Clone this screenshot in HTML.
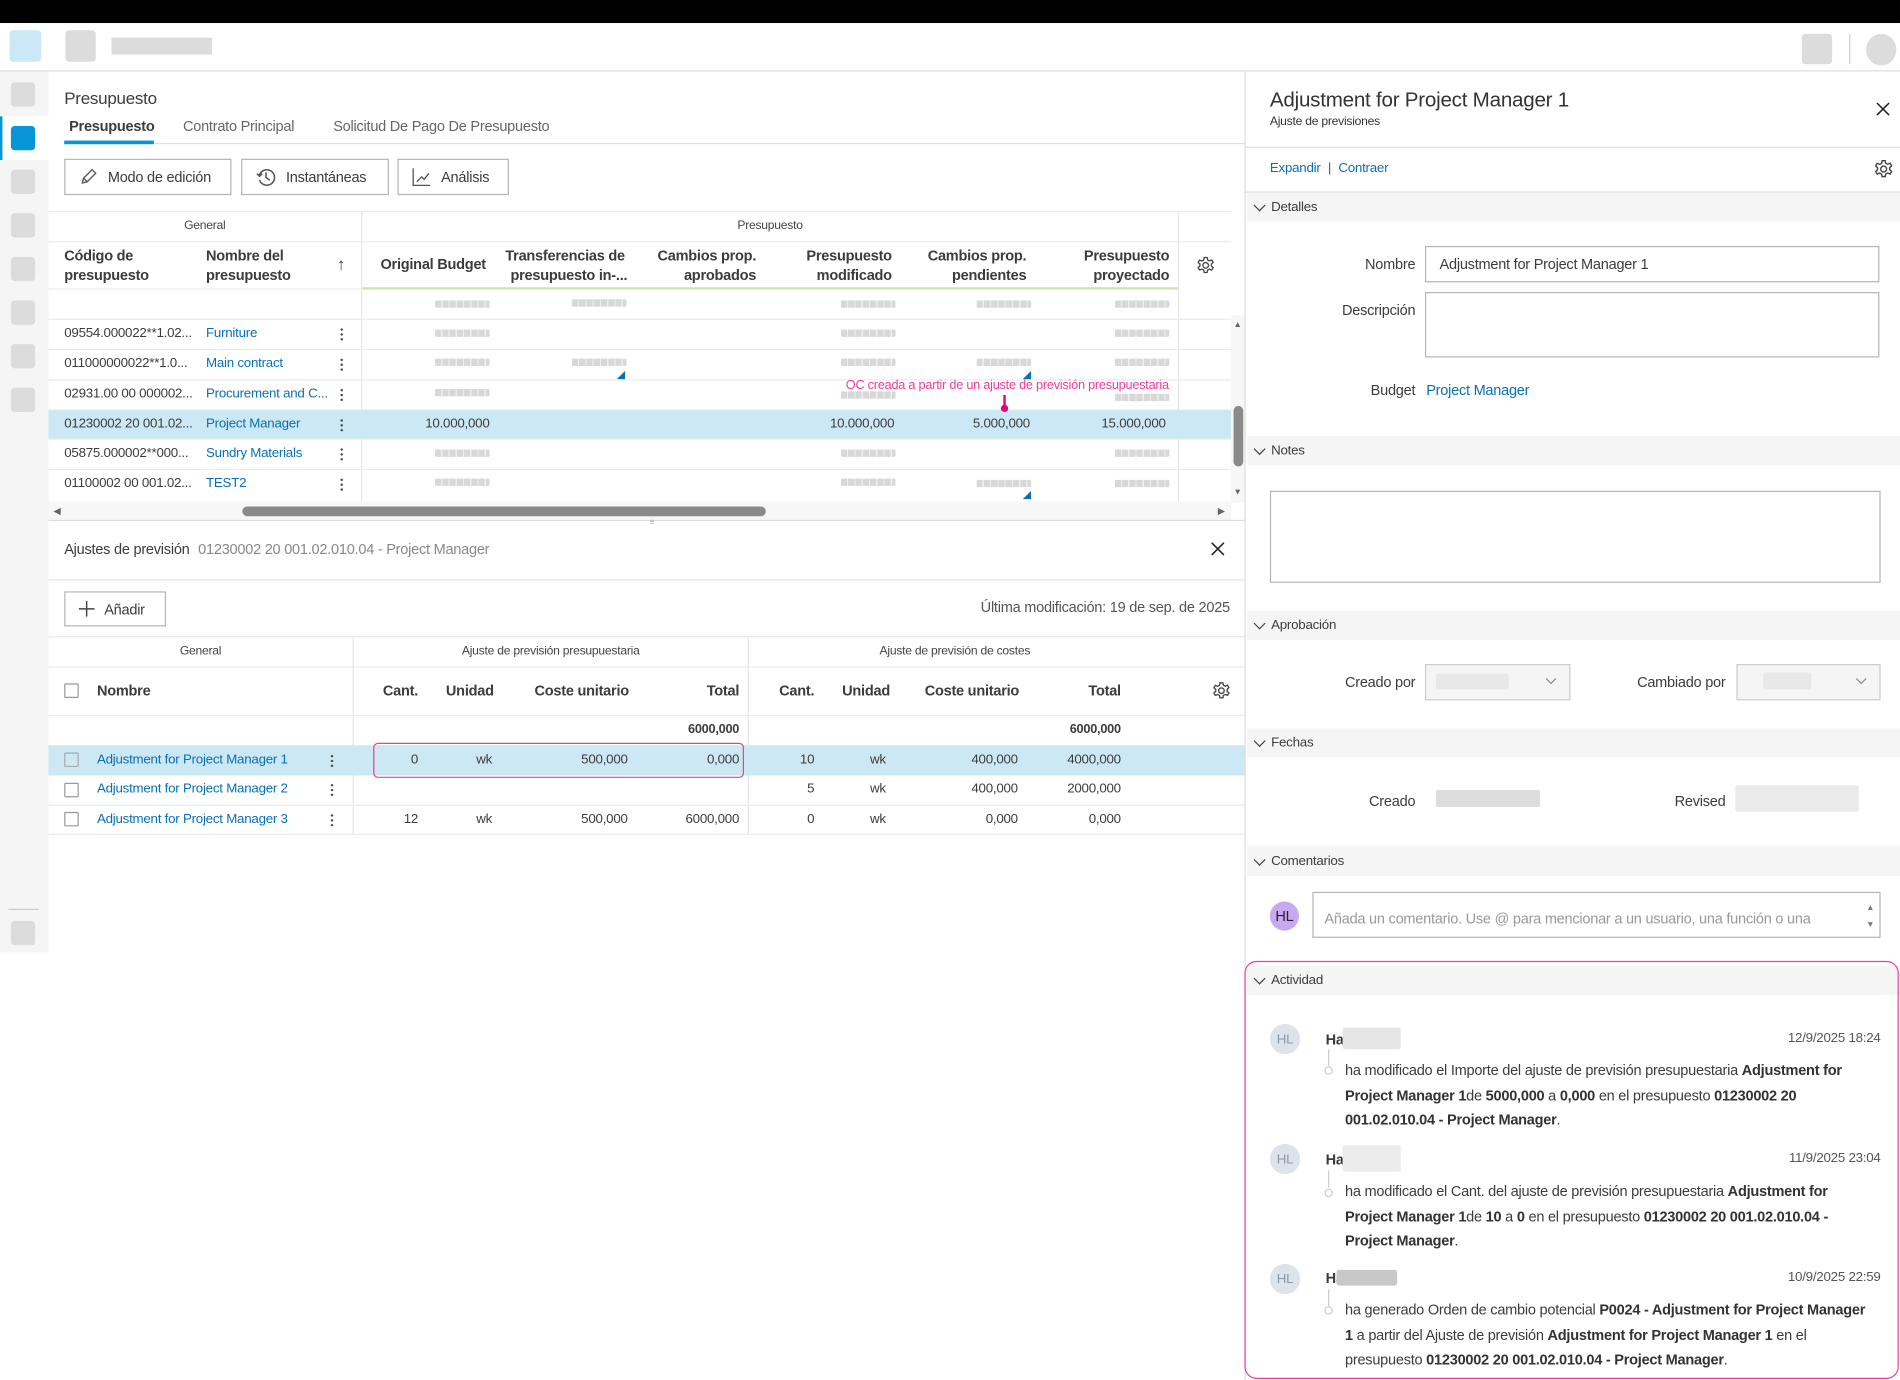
<!DOCTYPE html>
<html><head><meta charset="utf-8">
<style>
*{box-sizing:border-box;margin:0;padding:0}
html,body{width:1900px;height:1380px;overflow:hidden;background:#fff}
#s{position:absolute;left:0;top:0;width:1568px;height:1139px;transform:scale(1.21173);transform-origin:0 0;font-family:"Liberation Sans",sans-serif;color:#3c3c3c;font-size:11px;letter-spacing:-0.2px}
.a{position:absolute;white-space:nowrap}
.g{background:#dcdcdc;border-radius:3px;position:absolute}
.l{color:#0a6fb5}
.r{text-align:right}
.hl{position:absolute;height:1px;background:#ebebeb}
.vl{position:absolute;width:1px;background:#e6e6e6}
.blur{position:absolute;background:#e4e4e4;border-radius:2px}
.btn{position:absolute;border:1px solid #b5b5b5;background:#fff;font-size:12px;color:#3c3c3c;display:flex;align-items:center;gap:8px;padding-left:11px}
.sec{position:absolute;left:1029px;width:539px;background:#f5f5f5;font-size:11px;color:#3c3c3c;padding-left:20px;display:flex;align-items:center}
.sec:before{content:"";position:absolute;left:7px;top:50%;width:6px;height:6px;border-right:1.3px solid #444;border-bottom:1.3px solid #444;transform:translateY(-70%) rotate(45deg)}
.box{position:absolute;border:1px solid #b5b5b5;background:#fff}
.lab{position:absolute;font-size:12px;color:#3c3c3c;text-align:right;font-weight:500}
.dots{position:absolute;width:2px;height:11px;background:radial-gradient(circle,#444 0.9px,transparent 1.1px) 0 0/2px 4px repeat-y}
.cb{position:absolute;width:12px;height:12px;border:1px solid #999;border-radius:1px;background:#fff}
.ph{position:absolute;height:6px;width:45px;background:repeating-linear-gradient(90deg,#d8d8d8 0 5px,#eee 5px 6px);border-radius:1px}
.act{position:absolute;left:1110px;width:438px;font-size:12px;line-height:20.5px;color:#3c3c3c;white-space:normal}
.act b{font-weight:bold;color:#333}
.av{position:absolute;width:25px;height:25px;border-radius:50%;background:#dde3ea;color:#8a97a8;font-size:11px;display:flex;align-items:center;justify-content:center}
</style></head><body><div id="s">
<div class="a" style="left:0;top:0;width:1568px;height:19px;background:#000"></div>
<div class="a" style="left:0;top:58px;width:1568px;height:1px;background:#ddd"></div>
<div class="a" style="left:8px;top:25px;width:26px;height:26px;border-radius:3px;background:#cce8f6"></div>
<div class="g" style="left:54px;top:25px;width:25px;height:26px"></div>
<div class="a" style="left:92px;top:31px;width:83px;height:14px;background:#dcdcdc"></div>
<div class="g" style="left:1487px;top:28px;width:25px;height:25px"></div>
<div class="a" style="left:1526px;top:28px;width:1px;height:25px;background:#ccc"></div>
<div class="a" style="left:1540px;top:28px;width:25px;height:26px;border-radius:50%;background:#dcdcdc"></div>
<div class="a" style="left:0;top:59px;width:40px;height:727px;background:#f5f5f5"></div>
<div class="g" style="left:9px;top:68px;width:20px;height:20px"></div>
<div class="a" style="left:0;top:96px;width:40px;height:36px;background:#fff"></div>
<div class="a" style="left:0;top:96px;width:2px;height:36px;background:#0696d7"></div>
<div class="a" style="left:9px;top:104px;width:20px;height:20px;border-radius:3px;background:#0696d7"></div>
<div class="g" style="left:9px;top:140px;width:20px;height:20px"></div>
<div class="g" style="left:9px;top:176px;width:20px;height:20px"></div>
<div class="g" style="left:9px;top:212px;width:20px;height:20px"></div>
<div class="g" style="left:9px;top:248px;width:20px;height:20px"></div>
<div class="g" style="left:9px;top:284px;width:20px;height:20px"></div>
<div class="g" style="left:9px;top:320px;width:20px;height:20px"></div>
<div class="a" style="left:7px;top:750px;width:25px;height:1px;background:#ccc"></div>
<div class="g" style="left:9px;top:760px;width:20px;height:20px"></div>
<div class="a" style="left:53px;top:73px;font-size:14px;color:#3c3c3c">Presupuesto</div>
<div class="a" style="left:57px;top:97px;font-size:12px;font-weight:bold;color:#3c3c3c">Presupuesto</div>
<div class="a" style="left:151px;top:97px;font-size:12px;color:#666">Contrato Principal</div>
<div class="a" style="left:275px;top:97px;font-size:12px;color:#666">Solicitud De Pago De Presupuesto</div>
<div class="a" style="left:53px;top:118px;width:975px;height:1px;background:#e0e0e0"></div>
<div class="a" style="left:53px;top:116px;width:74px;height:3px;background:#0696d7"></div>
<div class="btn" style="left:53px;top:131px;width:138px;height:30px"><svg width="16" height="16" viewBox="0 0 16 16" fill="none" stroke="#555" stroke-width="1.1"><path d="M3 13l1-4 7-7 3 3-7 7z M4 9l3 3"/></svg>Modo de edición</div>
<div class="btn" style="left:199px;top:131px;width:122px;height:30px"><svg width="17" height="17" viewBox="0 0 16 16" fill="none" stroke="#555" stroke-width="1.2"><path d="M3 6a6 6 0 1 1 0 4 M1 5l2 2 2-2 M8 4v4l3 2"/></svg>Instantáneas</div>
<div class="btn" style="left:328px;top:131px;width:92px;height:30px"><svg width="16" height="16" viewBox="0 0 16 16" fill="none" stroke="#555" stroke-width="1.1"><path d="M1 1v14h14 M4 12l4-4 2 2 4-5"/></svg>Análisis</div>
<div class="a" style="left:40px;top:174px;width:976px;height:1px;background:#ebebeb"></div>
<div class="a" style="left:40px;top:175px;width:258px;font-size:10px;text-align:center;line-height:24px;color:#444">General</div>
<div class="a" style="left:299px;top:175px;width:673px;font-size:10px;text-align:center;line-height:24px;color:#444">Presupuesto</div>
<div class="hl" style="left:40px;top:199px;width:976px"></div>
<div class="vl" style="left:298px;top:175px;height:240px"></div>
<div class="vl" style="left:972px;top:175px;height:240px"></div>
<div class="a" style="left:53px;top:203px;font-size:12px;font-weight:bold;line-height:16px">Código de<br>presupuesto</div>
<div class="a" style="left:170px;top:203px;font-size:12px;font-weight:bold;line-height:16px">Nombre del<br>presupuesto</div>
<div class="a" style="left:278px;top:210px;font-size:14px;color:#444">↑</div>
<div class="a r" style="left:300px;top:211px;width:101px;font-size:12px;font-weight:bold">Original Budget</div>
<div class="a" style="left:415px;top:203px;font-size:12px;font-weight:bold;line-height:16px;text-align:center">Transferencias de<br>&nbsp;&nbsp;presupuesto in-...</div>
<div class="a r" style="left:520px;top:203px;width:104px;font-size:12px;font-weight:bold;line-height:16px">Cambios prop.<br>aprobados</div>
<div class="a r" style="left:630px;top:203px;width:106px;font-size:12px;font-weight:bold;line-height:16px">Presupuesto<br>modificado</div>
<div class="a r" style="left:740px;top:203px;width:107px;font-size:12px;font-weight:bold;line-height:16px">Cambios prop.<br>pendientes</div>
<div class="a r" style="left:855px;top:203px;width:110px;font-size:12px;font-weight:bold;line-height:16px">Presupuesto<br>proyectado</div>
<svg class="a" style="left:987px;top:211px" width="16" height="16" viewBox="0 0 16 16" fill="none" stroke="#444" stroke-width="1.1"><path d="M6.8 1.5h2.4l.4 2 1.5.8 1.9-.8 1.2 2-1.5 1.4v1.6l1.5 1.4-1.2 2-1.9-.8-1.5.8-.4 2H6.8l-.4-2-1.5-.8-1.9.8-1.2-2 1.5-1.4V7l-1.5-1.4 1.2-2 1.9.8 1.5-.8z"/><circle cx="8" cy="8" r="2.3"/></svg>
<div class="a" style="left:299px;top:237px;width:673px;height:2px;background:#cfe3b4"></div>
<div class="hl" style="left:40px;top:238px;width:258px"></div>
<div class="hl" style="left:40px;top:263px;width:976px"></div>
<div class="hl" style="left:40px;top:288px;width:976px"></div>
<div class="hl" style="left:40px;top:313px;width:976px"></div>
<div class="a" style="left:40px;top:338px;width:976px;height:24px;background:#cce8f4"></div>
<div class="hl" style="left:40px;top:362px;width:976px"></div>
<div class="hl" style="left:40px;top:387px;width:976px"></div>
<div class="ph" style="left:359px;top:248px"></div><div class="ph" style="left:472px;top:247px"></div><div class="ph" style="left:694px;top:248px"></div><div class="ph" style="left:806px;top:248px"></div><div class="ph" style="left:920px;top:248px"></div>
<div class="ph" style="left:359px;top:272px"></div><div class="ph" style="left:694px;top:272px"></div><div class="ph" style="left:920px;top:272px"></div>
<div class="ph" style="left:359px;top:296px"></div><div class="ph" style="left:472px;top:296px"></div><div class="ph" style="left:694px;top:296px"></div><div class="ph" style="left:806px;top:296px"></div><div class="ph" style="left:920px;top:296px"></div>
<div class="ph" style="left:359px;top:321px"></div><div class="ph" style="left:694px;top:323px"></div><div class="ph" style="left:920px;top:325px"></div>
<div class="ph" style="left:359px;top:371px"></div><div class="ph" style="left:694px;top:371px"></div><div class="ph" style="left:920px;top:371px"></div>
<div class="ph" style="left:359px;top:395px"></div><div class="ph" style="left:694px;top:395px"></div><div class="ph" style="left:806px;top:396px"></div><div class="ph" style="left:920px;top:396px"></div>
<svg class="a" style="left:509px;top:306px" width="7" height="7"><path d="M7 0V7H0z" fill="#0a6fb5"/></svg>
<svg class="a" style="left:844px;top:306px" width="7" height="7"><path d="M7 0V7H0z" fill="#0a6fb5"/></svg>
<svg class="a" style="left:844px;top:405px" width="7" height="7"><path d="M7 0V7H0z" fill="#0a6fb5"/></svg>
<div class="a" style="left:53px;top:269px">09554.000022**1.02...</div><div class="a l" style="left:170px;top:269px">Furniture</div><div class="dots" style="left:281px;top:270px"></div>
<div class="a" style="left:53px;top:294px">011000000022**1.0...</div><div class="a l" style="left:170px;top:294px">Main contract</div><div class="dots" style="left:281px;top:295px"></div>
<div class="a" style="left:53px;top:319px">02931.00 00 000002...</div><div class="a l" style="left:170px;top:319px">Procurement and C...</div><div class="dots" style="left:281px;top:320px"></div>
<div class="a" style="left:53px;top:344px">01230002 20 001.02...</div><div class="a l" style="left:170px;top:344px">Project Manager</div><div class="dots" style="left:281px;top:345px"></div>
<div class="a r" style="left:300px;top:344px;width:104px">10.000,000</div>
<div class="a r" style="left:630px;top:344px;width:108px">10.000,000</div>
<div class="a r" style="left:740px;top:344px;width:110px">5.000,000</div>
<div class="a r" style="left:855px;top:344px;width:107px">15.000,000</div>
<div class="a" style="left:53px;top:368px">05875.000002**000...</div><div class="a l" style="left:170px;top:368px">Sundry Materials</div><div class="dots" style="left:281px;top:369px"></div>
<div class="a" style="left:53px;top:393px">01100002 00 001.02...</div><div class="a l" style="left:170px;top:393px">TEST2</div><div class="dots" style="left:281px;top:394px"></div>
<div class="a" style="left:698px;top:312px;font-size:10.5px;color:#ee3d9b">OC creada a partir de un ajuste de previsión presupuestaria</div>
<div class="a" style="left:828px;top:326px;width:1.5px;height:10px;background:#e6007e"></div>
<div class="a" style="left:826px;top:334px;width:6px;height:6px;border-radius:50%;background:#e6007e"></div>
<div class="a" style="left:40px;top:414px;width:976px;height:15px;background:#f7f7f7"></div>
<div class="a" style="left:200px;top:418px;width:432px;height:8px;border-radius:4px;background:#8a8a8a"></div>
<div class="a" style="left:44px;top:417px;font-size:8px;color:#666">◀</div>
<div class="a" style="left:1005px;top:417px;font-size:8px;color:#666">▶</div>
<div class="a" style="left:1016px;top:260px;width:12px;height:155px;background:#f7f7f7"></div>
<div class="a" style="left:1018px;top:335px;width:8px;height:50px;border-radius:4px;background:#8a8a8a"></div>
<div class="a" style="left:1018px;top:265px;font-size:7px;color:#666">▲</div>
<div class="a" style="left:1018px;top:403px;font-size:7px;color:#666">▼</div>
<div class="a" style="left:40px;top:429px;width:988px;height:1px;background:#ddd"></div>
<div class="a" style="left:536px;top:428px;font-size:7px;color:#aaa">≡</div>
<div class="a" style="left:53px;top:446px;font-size:12px;color:#3c3c3c">Ajustes de previsión <span style="color:#888;margin-left:4px">01230002 20 001.02.010.04 - Project Manager</span></div>
<svg class="a" style="left:999px;top:447px" width="12" height="12" stroke="#222" stroke-width="1.3"><path d="M1 1l10 10M11 1L1 11"/></svg>
<div class="a" style="left:40px;top:478px;width:988px;height:1px;background:#e6e6e6"></div>
<div class="btn" style="left:53px;top:488px;width:84px;height:29px;font-size:12px"><svg width="13" height="13" stroke="#444" stroke-width="1.2"><path d="M6.5 0v13M0 6.5h13"/></svg>Añadir</div>
<div class="a r" style="left:700px;top:494px;width:315px;font-size:12px;color:#555">Última modificación: 19 de sep. de 2025</div>
<div class="a" style="left:40px;top:525px;width:988px;height:1px;background:#e6e6e6"></div>
<div class="a" style="left:40px;top:526px;width:251px;font-size:10px;text-align:center;line-height:24px;color:#444">General</div>
<div class="a" style="left:292px;top:526px;width:325px;font-size:10px;text-align:center;line-height:24px;color:#444">Ajuste de previsión presupuestaria</div>
<div class="a" style="left:618px;top:526px;width:340px;font-size:10px;text-align:center;line-height:24px;color:#444">Ajuste de previsión de costes</div>
<div class="hl" style="left:40px;top:550px;width:988px"></div>
<div class="vl" style="left:291px;top:526px;height:163px"></div>
<div class="vl" style="left:617px;top:526px;height:163px"></div>
<div class="cb" style="left:53px;top:564px"></div>
<div class="a" style="left:80px;top:563px;font-size:12px;font-weight:bold">Nombre</div>
<div class="a r" style="left:300px;top:563px;width:45px;font-size:12px;font-weight:bold">Cant.</div>
<div class="a" style="left:368px;top:563px;font-size:12px;font-weight:bold">Unidad</div>
<div class="a r" style="left:420px;top:563px;width:99px;font-size:12px;font-weight:bold">Coste unitario</div>
<div class="a r" style="left:560px;top:563px;width:50px;font-size:12px;font-weight:bold">Total</div>
<div class="a r" style="left:630px;top:563px;width:42px;font-size:12px;font-weight:bold">Cant.</div>
<div class="a" style="left:695px;top:563px;font-size:12px;font-weight:bold">Unidad</div>
<div class="a r" style="left:740px;top:563px;width:101px;font-size:12px;font-weight:bold">Coste unitario</div>
<div class="a r" style="left:870px;top:563px;width:55px;font-size:12px;font-weight:bold">Total</div>
<svg class="a" style="left:1000px;top:562px" width="16" height="16" viewBox="0 0 16 16" fill="none" stroke="#444" stroke-width="1.1"><path d="M6.8 1.5h2.4l.4 2 1.5.8 1.9-.8 1.2 2-1.5 1.4v1.6l1.5 1.4-1.2 2-1.9-.8-1.5.8-.4 2H6.8l-.4-2-1.5-.8-1.9.8-1.2-2 1.5-1.4V7l-1.5-1.4 1.2-2 1.9.8 1.5-.8z"/><circle cx="8" cy="8" r="2.3"/></svg>
<div class="hl" style="left:40px;top:590px;width:988px"></div>
<div class="a r" style="left:540px;top:596px;width:70px;font-weight:bold;font-size:10.5px">6000,000</div>
<div class="a r" style="left:855px;top:596px;width:70px;font-weight:bold;font-size:10.5px">6000,000</div>
<div class="a" style="left:40px;top:615px;width:988px;height:25px;background:#cce8f4"></div>
<div class="hl" style="left:40px;top:664px;width:988px"></div>
<div class="hl" style="left:40px;top:688px;width:988px"></div>
<div class="cb" style="left:53px;top:621px;border-color:#aaa;background:#cce8f4"></div>
<div class="a l" style="left:80px;top:621px">Adjustment for Project Manager 1</div><div class="dots" style="left:273px;top:622px"></div>
<div class="a r" style="left:300px;top:621px;width:45px">0</div><div class="a" style="left:393px;top:621px">wk</div><div class="a r" style="left:420px;top:621px;width:98px">500,000</div><div class="a r" style="left:540px;top:621px;width:70px">0,000</div>
<div class="a r" style="left:630px;top:621px;width:42px">10</div><div class="a" style="left:718px;top:621px">wk</div><div class="a r" style="left:740px;top:621px;width:100px">400,000</div><div class="a r" style="left:855px;top:621px;width:70px">4000,000</div>
<div class="cb" style="left:53px;top:646px"></div>
<div class="a l" style="left:80px;top:645px">Adjustment for Project Manager 2</div><div class="dots" style="left:273px;top:646px"></div>
<div class="a r" style="left:630px;top:645px;width:42px">5</div><div class="a" style="left:718px;top:645px">wk</div><div class="a r" style="left:740px;top:645px;width:100px">400,000</div><div class="a r" style="left:855px;top:645px;width:70px">2000,000</div>
<div class="cb" style="left:53px;top:670px"></div>
<div class="a l" style="left:80px;top:670px">Adjustment for Project Manager 3</div><div class="dots" style="left:273px;top:671px"></div>
<div class="a r" style="left:300px;top:670px;width:45px">12</div><div class="a" style="left:393px;top:670px">wk</div><div class="a r" style="left:420px;top:670px;width:98px">500,000</div><div class="a r" style="left:540px;top:670px;width:70px">6000,000</div>
<div class="a r" style="left:630px;top:670px;width:42px">0</div><div class="a" style="left:718px;top:670px">wk</div><div class="a r" style="left:740px;top:670px;width:100px">0,000</div><div class="a r" style="left:855px;top:670px;width:70px">0,000</div>
<div class="a" style="left:308px;top:613px;width:306px;height:29px;border:1.5px solid #ee3d9b;border-radius:4px"></div>
<div class="a" style="left:1027px;top:59px;width:1px;height:1080px;background:#ddd"></div>
<div class="a" style="left:1048px;top:73px;font-size:17px;color:#333">Adjustment for Project Manager 1</div>
<div class="a" style="left:1048px;top:95px;font-size:10px;color:#333;font-weight:500">Ajuste de previsiones</div>
<svg class="a" style="left:1548px;top:84px" width="12" height="12" stroke="#222" stroke-width="1.3"><path d="M1 1l10 10M11 1L1 11"/></svg>
<div class="a" style="left:1028px;top:121px;width:540px;height:1px;background:#ddd"></div>
<div class="a" style="left:1048px;top:133px;font-size:11px"><span class="l">Expandir</span><span style="color:#555;margin:0 6px">|</span><span class="l">Contraer</span></div>
<svg class="a" style="left:1546px;top:131px" width="17" height="17" viewBox="0 0 16 16" fill="none" stroke="#444" stroke-width="1.1"><path d="M6.8 1.5h2.4l.4 2 1.5.8 1.9-.8 1.2 2-1.5 1.4v1.6l1.5 1.4-1.2 2-1.9-.8-1.5.8-.4 2H6.8l-.4-2-1.5-.8-1.9.8-1.2-2 1.5-1.4V7l-1.5-1.4 1.2-2 1.9.8 1.5-.8z"/><circle cx="8" cy="8" r="2.3"/></svg>
<div class="a" style="left:1028px;top:158px;width:540px;height:1px;background:#ddd"></div>
<div class="sec" style="top:159px;height:24px">Detalles</div>
<div class="lab" style="left:1080px;top:211px;width:88px">Nombre</div>
<div class="box" style="left:1176px;top:203px;width:375px;height:30px"></div>
<div class="a" style="left:1188px;top:211px;font-size:12px">Adjustment for Project Manager 1</div>
<div class="lab" style="left:1060px;top:249px;width:108px">Descripción</div>
<div class="box" style="left:1176px;top:241px;width:375px;height:54px"></div>
<div class="lab" style="left:1080px;top:315px;width:88px">Budget</div>
<div class="a l" style="left:1177px;top:315px;font-size:12px">Project Manager</div>
<div class="sec" style="top:360px;height:24px">Notes</div>
<div class="box" style="left:1048px;top:405px;width:504px;height:76px"></div>
<div class="sec" style="top:504px;height:24px">Aprobación</div>
<div class="lab" style="left:1070px;top:556px;width:98px">Creado por</div>
<div class="box" style="left:1176px;top:548px;width:120px;height:30px;background:#f5f5f5;border-color:#ccc"></div>
<div class="blur" style="left:1185px;top:556px;width:60px;height:13px;background:#e8e8e8"></div>
<svg class="a" style="left:1275px;top:559px" width="10" height="7" stroke="#888" fill="none"><path d="M1 1l4 4 4-4"/></svg>
<div class="lab" style="left:1320px;top:556px;width:104px">Cambiado por</div>
<div class="box" style="left:1433px;top:548px;width:119px;height:30px;background:#f5f5f5;border-color:#ccc"></div>
<div class="blur" style="left:1455px;top:555px;width:40px;height:14px;background:#e8e8e8"></div>
<svg class="a" style="left:1531px;top:559px" width="10" height="7" stroke="#888" fill="none"><path d="M1 1l4 4 4-4"/></svg>
<div class="sec" style="top:601px;height:24px">Fechas</div>
<div class="lab" style="left:1080px;top:654px;width:88px">Creado</div>
<div class="blur" style="left:1185px;top:652px;width:86px;height:14px;background:#ddd"></div>
<div class="lab" style="left:1340px;top:654px;width:84px">Revised</div>
<div class="blur" style="left:1432px;top:648px;width:102px;height:22px;background:#ebebeb"></div>
<div class="sec" style="top:698px;height:25px">Comentarios</div>
<div class="a" style="left:1048px;top:744px;width:24px;height:24px;border-radius:50%;background:#c9a8f2;color:#222;font-size:12px;display:flex;align-items:center;justify-content:center">HL</div>
<div class="box" style="left:1083px;top:736px;width:469px;height:38px;overflow:hidden"></div>
<div class="a" style="left:1093px;top:751px;font-size:12px;color:#999">Añada un comentario. Use @ para mencionar a un usuario, una función o una</div>
<div class="a" style="left:1540px;top:746px;font-size:7px;color:#777">▲</div>
<div class="a" style="left:1540px;top:760px;font-size:7px;color:#777">▼</div>
<div class="sec" style="top:797px;height:24px">Actividad</div>
<div class="a" style="left:1027px;top:793px;width:540px;height:345px;border:1.5px solid #ee3d9b;border-radius:10px"></div>
<div class="av" style="left:1048px;top:845px">HL</div>
<div class="a" style="left:1094px;top:851px;font-size:12px;font-weight:bold">Ha</div><div class="blur" style="left:1108px;top:848px;width:48px;height:18px;background:#e6e6e6"></div>
<div class="a r" style="left:1400px;top:851px;width:152px;font-size:11px;color:#555">12/9/2025 18:24</div>
<div class="a" style="left:1096px;top:866px;width:1px;height:14px;background:#ccc"></div>
<div class="a" style="left:1093px;top:880px;width:7px;height:7px;border:1px solid #ccc;border-radius:50%"></div>
<div class="act" style="top:873px">ha modificado el Importe del ajuste de previsión presupuestaria <b>Adjustment for Project Manager 1</b>de <b>5000,000</b> a <b>0,000</b> en el presupuesto <b>01230002 20 001.02.010.04 - Project Manager</b>.</div>
<div class="av" style="left:1048px;top:944px">HL</div>
<div class="a" style="left:1094px;top:950px;font-size:12px;font-weight:bold">Ha</div><div class="blur" style="left:1108px;top:945px;width:48px;height:22px;background:#ececec"></div>
<div class="a r" style="left:1400px;top:950px;width:152px;font-size:11px;color:#555">11/9/2025 23:04</div>
<div class="a" style="left:1096px;top:966px;width:1px;height:14px;background:#ccc"></div>
<div class="a" style="left:1093px;top:981px;width:7px;height:7px;border:1px solid #ccc;border-radius:50%"></div>
<div class="act" style="top:973px">ha modificado el Cant. del ajuste de previsión presupuestaria <b>Adjustment for Project Manager 1</b>de <b>10</b> a <b>0</b> en el presupuesto <b>01230002 20 001.02.010.04 - Project Manager</b>.</div>
<div class="av" style="left:1048px;top:1043px">HL</div>
<div class="a" style="left:1094px;top:1048px;font-size:12px;font-weight:bold">Ha</div><div class="blur" style="left:1103px;top:1048px;width:50px;height:13px;background:#c8c8c8"></div>
<div class="a r" style="left:1400px;top:1048px;width:152px;font-size:11px;color:#555">10/9/2025 22:59</div>
<div class="a" style="left:1096px;top:1064px;width:1px;height:14px;background:#ccc"></div>
<div class="a" style="left:1093px;top:1078px;width:7px;height:7px;border:1px solid #ccc;border-radius:50%"></div>
<div class="act" style="top:1071px">ha generado Orden de cambio potencial <b>P0024 - Adjustment for Project Manager 1</b> a partir del Ajuste de previsión <b>Adjustment for Project Manager 1</b> en el presupuesto <b>01230002 20 001.02.010.04 - Project Manager</b>.</div>
</div></body></html>
